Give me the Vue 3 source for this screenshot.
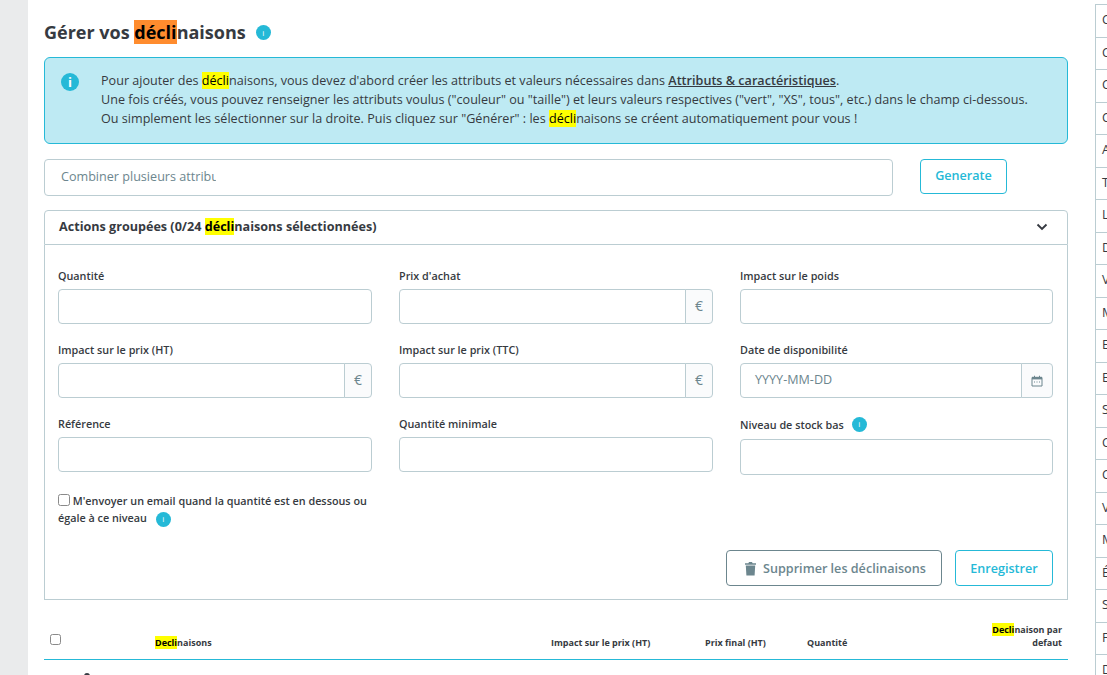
<script setup>
const sideLetters = ['C','C','C','C','A','T','L','D','V','M','E','E','S','C','C','V','M','É','S','F','D']
const fields = [
  { label: "Quantité" },
  { label: "Prix d'achat", addon: '€' },
  { label: 'Impact sur le poids' },
  { label: 'Impact sur le prix (HT)', addon: '€' },
  { label: 'Impact sur le prix (TTC)', addon: '€' },
  { label: 'Date de disponibilité', placeholder: 'YYYY-MM-DD', calendar: true },
  { label: 'Référence' },
  { label: 'Quantité minimale' },
  { label: 'Niveau de stock bas', info: true },
]
</script>

<template>
  <div class="page">
    <div class="strip"></div>
    <main class="main">
      <h2 class="title"><span>Gérer vos <mark class="orange">décli</mark>naisons</span><span class="info title-info">i</span></h2>

      <div class="alert">
        <span class="alert-icon">i</span>
        <p class="alert-text">
          Pour ajouter des <mark>décli</mark>naisons, vous devez d'abord créer les attributs et valeurs nécessaires dans <a class="link">Attributs &amp; caractéristiques</a>.<br>
          Une fois créés, vous pouvez renseigner les attributs voulus ("couleur" ou "taille") et leurs valeurs respectives ("vert", "XS", tous", etc.) dans le champ ci-dessous.<br>
          Ou simplement les sélectionner sur la droite. Puis cliquez sur "Générer" : les <mark>décli</mark>naisons se créent automatiquement pour vous !
        </p>
      </div>

      <div class="combine">
        <div class="combine-input"><span class="combine-ph">Combiner plusieurs attributs</span></div>
        <button class="btn btn-primary generate">Generate</button>
      </div>

      <section class="panel">
        <header class="panel-head">
          <span>Actions groupées (0/24 <mark>décli</mark>naisons sélectionnées)</span>
          <svg class="chevron" width="12" height="8" viewBox="0 0 12 8"><path d="M1.5 1.5 6 6l4.5-4.5" fill="none" stroke="#363a41" stroke-width="1.9"/></svg>
        </header>
        <div class="panel-body">
          <div class="grid">
            <div v-for="f in fields" :key="f.label" class="field" :class="{ 'field-info': f.info }">
              <label class="label">{{ f.label }}<span v-if="f.info" class="info label-info">i</span></label>
              <div class="control">
                <div class="input"><span v-if="f.placeholder" class="ph">{{ f.placeholder }}</span></div>
                <div v-if="f.addon" class="addon">{{ f.addon }}</div>
                <div v-if="f.calendar" class="addon addon-wide">
                  <svg width="12" height="12" viewBox="0 0 12 12">
                    <path d="M1 2.5h10v8.5H1z" fill="none" stroke="#6c868e" stroke-width="1"/>
                    <path d="M1 1.8h10v2.6H1z" fill="#6c868e"/>
                    <path d="M3 .8h1v1.5H3zM8 .8h1v1.5H8z" fill="#6c868e"/>
                    <path d="M3 6.5h1v1H3zM5.5 6.5h1v1h-1zM8 6.5h1v1H8z" fill="#6c868e"/>
                  </svg>
                </div>
              </div>
            </div>
          </div>
          <div class="notify">
            <span class="check"></span> M'envoyer un email quand la quantité est en dessous ou égale à ce niveau <span class="info notify-info">i</span>
          </div>
          <div class="actions">
            <button class="btn btn-secondary">
              <svg width="13" height="15" viewBox="0 0 13 15"><path d="M1 2.2h3.4L5 1h3l.6 1.2H12v1.6H1zM1.8 4.6h9.4l-.6 10H2.4z" fill="#6c868e"/></svg>
              Supprimer les déclinaisons
            </button>
            <button class="btn btn-primary save">Enregistrer</button>
          </div>
        </div>
      </section>

      <div class="thead">
        <div class="th th-check"><span class="check"></span></div>
        <div class="th"><mark>Decli</mark>naisons</div>
        <div class="th">Impact sur le prix (HT)</div>
        <div class="th">Prix final (HT)</div>
        <div class="th">Quantité</div>
        <div class="th th-right"><mark>Decli</mark>naison par defaut</div>
      </div>
      <div class="tbody"><span class="dot"></span></div>
    </main>
    <aside class="side">
      <div v-for="(l, i) in sideLetters" :key="i" class="side-row">{{ l }}</div>
    </aside>
  </div>
</template>

<style>
html, body { margin: 0; height: 100%; overflow: hidden; background: #fff; }
</style>

<style scoped>
* { box-sizing: border-box; }
.page {
  display: flex;
  width: 1107px;
  height: 675px;
  overflow: hidden;
  font-family: "Open Sans", sans-serif;
  font-size: 12.6px;
  color: #363a41;
  background: #fff;
}
.strip { width: 28px; flex: none; background: #eaebec; }
.main { width: 1040px; flex: none; padding-left: 16px; margin-right: 27px; }
mark { background: #ff0; color: #000; }
mark.orange { background: #ff8c2e; }
.title {
  margin: 20px 0 0;
  font-size: 18px;
  font-weight: 700;
  line-height: 25px;
  display: flex;
  align-items: center;
}
.info {
  display: inline-flex;
  align-items: center;
  justify-content: center;
  width: 15px;
  height: 15px;
  border-radius: 50%;
  background: #25b9d7;
  color: #fff;
  font-size: 8px;
  font-weight: 400;
  line-height: 1;
}
.title-info { margin-left: 10px; }
.alert {
  display: flex;
  margin-top: 12px;
  height: 87px;
  padding: 13px 0 0 16px;
  background: #beeaf3;
  border: 1px solid #25b9d7;
  border-radius: 6px;
}
.alert-icon {
  flex: none;
  width: 18px;
  height: 18px;
  margin-top: 2px;
  border-radius: 50%;
  background: #25b9d7;
  color: #fff;
  font-size: 13px;
  font-weight: 700;
  line-height: 18px;
  text-align: center;
}
.alert-text { margin: 0 0 0 22px; line-height: 19px; white-space: nowrap; }
.link { font-weight: 600; text-decoration: underline; color: #363a41; }
.combine { display: flex; align-items: flex-start; margin-top: 15px; }
.combine-input {
  width: 849px;
  height: 37px;
  padding: 0 0 3px 16px;
  border: 1px solid #bbcdd2;
  border-radius: 4px;
  display: flex;
  align-items: center;
}
.combine-ph {
  display: block;
  width: 155px;
  overflow: hidden;
  white-space: nowrap;
  color: #6c868e;
  font-size: 12.6px;
}
.btn {
  font-family: inherit;
  font-size: 12.6px;
  font-weight: 600;
  height: 36px;
  background: #fff;
  border-radius: 4px;
  border: 1px solid;
  padding: 0;
}
.btn-primary { color: #25b9d7; border-color: #25b9d7; }
.btn-secondary {
  width: 216px;
  color: #6c868e;
  border-color: #6c868e;
  display: flex;
  align-items: center;
  justify-content: center;
  gap: 6px;
  padding-left: 2px;
}
.generate { width: 87px; height: 35px; margin-left: 27px; padding-bottom: 2px; }
.save { width: 98px; }
.panel { margin-top: 14px; width: 1024px; }
.panel-head {
  height: 35px;
  display: flex;
  align-items: center;
  justify-content: space-between;
  padding: 0 19px 2px 14px;
  font-weight: 700;
  color: #363a41;
  border: 1px solid #bbcdd2;
  border-radius: 4px 4px 0 0;
}
.panel-body {
  height: 355px;
  padding: 22px 14px 0 13px;
  border: 1px solid #bbcdd2;
  border-top: 0;
}
.grid {
  display: grid;
  grid-template-columns: 314px 314px 313px;
  column-gap: 27px;
  grid-auto-rows: 74px;
}
.label {
  display: flex;
  align-items: center;
  height: 22px;
  padding-bottom: 6px;
  font-size: 10.8px;
  font-weight: 600;
  color: #363a41;
}
.field-info .label { height: 24px; }
.label-info { margin-left: 8px; }
.control { display: flex; height: 35px; }
.field-info .control { height: 36px; }
.input {
  flex: 1;
  min-width: 0;
  border: 1px solid #bbcdd2;
  border-radius: 4px;
  display: flex;
  align-items: center;
  padding: 0 0 3px 14px;
}
.control:has(.addon) .input { border-radius: 4px 0 0 4px; }
.ph { color: #6c868e; font-size: 12.6px; }
.addon {
  width: 28px;
  flex: none;
  margin-left: -1px;
  display: flex;
  align-items: center;
  justify-content: center;
  padding-bottom: 2px;
  background: #fafbfc;
  border: 1px solid #bbcdd2;
  border-radius: 0 4px 4px 0;
  color: #6c868e;
  font-size: 14px;
}
.addon-wide { width: 32px; padding-bottom: 0; }
.notify {
  width: 314px;
  height: 38px;
  margin-top: 3px;
  font-size: 10.8px;
  font-weight: 600;
  line-height: 17px;
  color: #363a41;
}
.check {
  display: inline-block;
  width: 12px;
  height: 12px;
  border: 1.5px solid #8a8a8a;
  border-radius: 2.5px;
  vertical-align: -1px;
  background: #fff;
}
.notify-info { margin: -4px 0 -4px 6px; vertical-align: middle; }
.actions { display: flex; justify-content: flex-end; gap: 13px; margin-top: 20px; }
.thead {
  display: grid;
  grid-template-columns: 111px 396px 154px 102px 178px 83px;
  height: 60px;
  width: 1024px;
  border-bottom: 1px solid #25b9d7;
  align-items: end;
  padding-bottom: 10px;
}
.th { font-size: 9px; font-weight: 700; line-height: 13px; color: #363a41; }
.th-check { padding-left: 6px; padding-bottom: 4px; }
.th-check .check { display: block; width: 11px; height: 11px; }
.th-right { grid-column: 6; text-align: right; padding-right: 6px; }
.tbody { position: relative; height: 20px; }
.dot {
  position: absolute;
  left: 40px;
  top: 13px;
  width: 6px;
  height: 6px;
  border-radius: 50%;
  background: #363a41;
}
.side {
  width: 12px;
  flex: none;
  margin-top: 4px;
  border-left: 1px solid #bbcdd2;
}
.side-row {
  height: 32.5px;
  border-top: 1px solid #bbcdd2;
  padding-left: 6px;
  line-height: 30px;
  font-size: 12.6px;
  color: #363a41;
  white-space: nowrap;
}
</style>
